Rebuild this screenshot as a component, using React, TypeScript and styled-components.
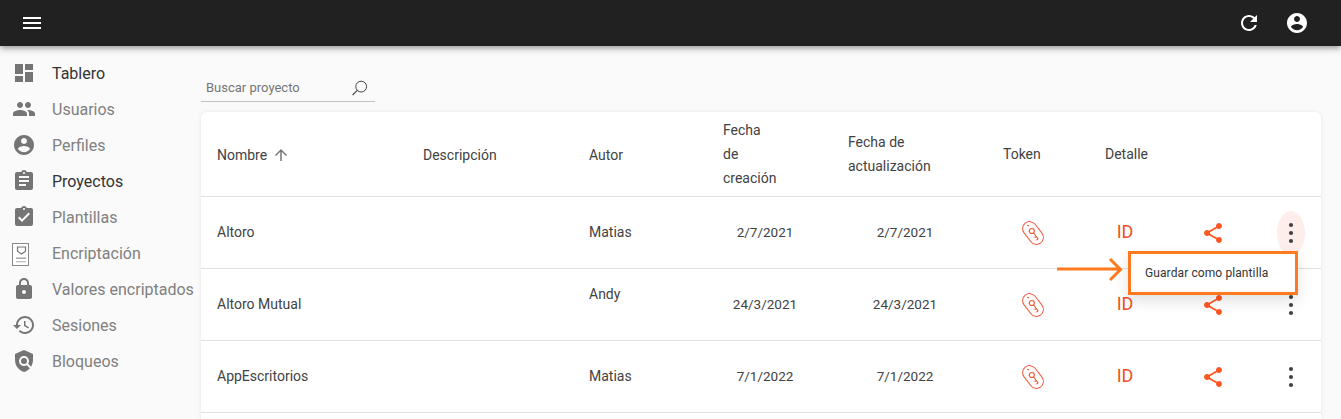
import styled, { createGlobalStyle } from "styled-components";

const GlobalStyle = createGlobalStyle`
  html, body {
    margin: 0;
    padding: 0;
    height: 419px;
    overflow: hidden;
    background: #fafafa;
    font-family: "Roboto", "Liberation Sans", sans-serif;
  }
  * {
    box-sizing: border-box;
  }
`;

const paths = {
  menu: "M3 18h18v-2H3v2zm0-5h18v-2H3v2zm0-7v2h18V6H3z",
  refresh:
    "M17.65 6.35C16.2 4.9 14.21 4 12 4c-4.42 0-7.99 3.58-7.99 8s3.57 8 7.99 8c3.73 0 6.84-2.55 7.73-6h-2.08c-.82 2.33-3.04 4-5.65 4-3.31 0-6-2.69-6-6s2.69-6 6-6c1.66 0 3.14.69 4.22 1.78L13 11h7V4l-2.35 2.35z",
  account:
    "M12 2C6.48 2 2 6.48 2 12s4.48 10 10 10 10-4.48 10-10S17.52 2 12 2zm0 3c1.66 0 3 1.34 3 3s-1.34 3-3 3-3-1.34-3-3 1.34-3 3-3zm0 14.2c-2.5 0-4.71-1.28-6-3.22.03-1.99 4-3.08 6-3.08 1.99 0 5.97 1.09 6 3.08-1.29 1.94-3.5 3.22-6 3.22z",
  dashboard: "M3 13h8V3H3v10zm0 8h8v-6H3v6zm10 0h8V11h-8v10zm0-18v6h8V3h-8z",
  people:
    "M16 11c1.66 0 2.99-1.34 2.99-3S17.66 5 16 5c-1.66 0-3 1.34-3 3s1.34 3 3 3zm-8 0c1.66 0 2.99-1.34 2.99-3S9.66 5 8 5C6.34 5 5 6.34 5 8s1.34 3 3 3zm0 2c-2.33 0-7 1.17-7 3.5V19h14v-2.5c0-2.33-4.67-3.5-7-3.5zm8 0c-.29 0-.62.02-.97.05 1.16.84 1.97 1.97 1.97 3.45V19h6v-2.5c0-2.33-4.67-3.5-7-3.5z",
  assignment:
    "M19 3h-4.18C14.4 1.84 13.3 1 12 1c-1.3 0-2.4.84-2.82 2H5c-1.1 0-2 .9-2 2v14c0 1.1.9 2 2 2h14c1.1 0 2-.9 2-2V5c0-1.1-.9-2-2-2zm-7 0c.55 0 1 .45 1 1s-.45 1-1 1-1-.45-1-1 .45-1 1-1zm2 14H7v-2h7v2zm3-4H7v-2h10v2zm0-4H7V7h10v2z",
  assignmentDone:
    "M19 3h-4.18C14.4 1.84 13.3 1 12 1c-1.3 0-2.4.84-2.82 2H5c-1.1 0-2 .9-2 2v14c0 1.1.9 2 2 2h14c1.1 0 2-.9 2-2V5c0-1.1-.9-2-2-2zm-7 0c.55 0 1 .45 1 1s-.45 1-1 1-1-.45-1-1 .45-1 1-1zm-2 14l-4-4 1.41-1.41L10 14.17l6.59-6.59L18 9l-8 8z",
  lock: "M18 8h-1V6c0-2.76-2.24-5-5-5S7 3.24 7 6v2H6c-1.1 0-2 .9-2 2v10c0 1.1.9 2 2 2h12c1.1 0 2-.9 2-2V10c0-1.1-.9-2-2-2zm-6 9c-1.1 0-2-.9-2-2s.9-2 2-2 2 .9 2 2-.9 2-2 2zm3.1-9H8.9V6c0-1.71 1.39-3.1 3.1-3.1 1.71 0 3.1 1.39 3.1 3.1v2z",
  history:
    "M13 3c-4.97 0-9 4.03-9 9H1l3.89 3.89.07.14L9 12H6c0-3.87 3.13-7 7-7s7 3.13 7 7-3.13 7-7 7c-1.93 0-3.68-.79-4.94-2.06l-1.42 1.42C8.27 19.99 10.51 21 13 21c4.97 0 9-4.03 9-9s-4.03-9-9-9zm-1 5v5l4.28 2.54.72-1.21-3.5-2.08V8H12z",
  policy:
    "M21 5l-9-4-9 4v6c0 5.55 3.84 10.74 9 12 2.3-.56 4.33-1.9 5.88-3.71l-3.12-3.12c-1.94 1.29-4.58 1.07-6.29-.64-1.95-1.95-1.95-5.12 0-7.07 1.95-1.95 5.12-1.95 7.07 0 1.71 1.71 1.92 4.35.64 6.29l2.9 2.9C20.29 15.69 21 13.38 21 11V5zM12 15a3 3 0 1 0 0-6 3 3 0 0 0 0 6z",
  share:
    "M18 16.08c-.76 0-1.44.3-1.96.77L8.91 12.7c.05-.23.09-.46.09-.7s-.04-.47-.09-.7l7.05-4.11c.54.5 1.25.81 2.04.81 1.66 0 3-1.34 3-3s-1.34-3-3-3-3 1.34-3 3c0 .24.04.47.09.7L8.04 9.81C7.5 9.31 6.79 9 6 9c-1.66 0-3 1.34-3 3s1.34 3 3 3c.79 0 1.5-.31 2.04-.81l7.12 4.16c-.05.21-.08.43-.08.65 0 1.61 1.31 2.92 2.92 2.92 1.61 0 2.92-1.31 2.92-2.92s-1.31-2.92-2.92-2.92z",
  arrowUp: "M4 12l1.41 1.41L11 7.83V20h2V7.83l5.58 5.59L20 12l-8-8-8 8z",
};

const Icon = ({ d, size = 24, color }: { d: string; size?: number; color: string }) => (
  <svg width={size} height={size} viewBox="0 0 24 24" fill={color} style={{ display: "block" }}>
    <path d={d} fillRule="evenodd" />
  </svg>
);

const CertificateIcon = () => (
  <svg width="24" height="24" viewBox="0 0 24 24" style={{ display: "block", overflow: "visible" }}>
    <rect x="0.5" y="2.5" width="16" height="22" fill="#fff" stroke="#8a8a8a" />
    <path d="M5.5 6h8v4.2L9.5 13l-4-2.8z" fill="none" stroke="#757575" strokeWidth="1.2" />
    <rect x="4" y="16.5" width="10" height="1.4" fill="#9e9e9e" />
    <rect x="4" y="20" width="10" height="1.4" fill="#c4c4c4" />
  </svg>
);

const TokenIcon = () => (
  <svg width="24" height="26" viewBox="0 0 24 26" fill="none" stroke="#f0583a" style={{ display: "block" }}>
    <rect x="5" y="0.4" width="14" height="25.2" rx="7" transform="rotate(-38 12 13)" strokeWidth="1" />
    <circle cx="7" cy="5.6" r="0.9" fill="#f0583a" stroke="none" />
    <circle cx="10.8" cy="11" r="2.5" strokeWidth="1.2" />
    <path d="M12.6 13l4.6 6M15.2 16.6l-1.6 1.2M17 19l-1.6 1.2" strokeWidth="1.2" />
  </svg>
);

const KebabIcon = () => (
  <svg width="24" height="24" viewBox="0 0 24 24" fill="#424242" style={{ display: "block", position: "relative" }}>
    <circle cx="12" cy="4" r="2.1" />
    <circle cx="12" cy="12" r="2.1" />
    <circle cx="12" cy="20" r="2.1" />
  </svg>
);

const SearchIcon = () => (
  <svg width="18" height="18" viewBox="0 0 18 18" fill="none" stroke="#424242" style={{ display: "block" }}>
    <circle cx="10.2" cy="7.6" r="5.4" strokeWidth="1" />
    <path d="M6.3 11.4L1.6 16" strokeWidth="1.1" />
  </svg>
);

const columns = "206px 166px 134px 125px 155px 102px 72px 104px 56px";

const navItems = [
  { label: "Tablero", icon: paths.dashboard, active: true },
  { label: "Usuarios", icon: paths.people },
  { label: "Perfiles", icon: paths.account },
  { label: "Proyectos", icon: paths.assignment, active: true },
  { label: "Plantillas", icon: paths.assignmentDone },
  { label: "Encriptación", custom: true },
  { label: "Valores encriptados", icon: paths.lock },
  { label: "Sesiones", icon: paths.history },
  { label: "Bloqueos", icon: paths.policy },
];

const projects = [
  { name: "Altoro", author: "Matias", created: "2/7/2021", updated: "2/7/2021", highlighted: true },
  { name: "Altoro Mutual", author: "Andy", created: "24/3/2021", updated: "24/3/2021", raised: true },
  { name: "AppEscritorios", author: "Matias", created: "7/1/2022", updated: "7/1/2022" },
];

const App = () => {
  return (
    <>
      <GlobalStyle />
      <TopBar>
        <Icon d={paths.menu} color="#fff" />
        <TopActions>
          <Icon d={paths.refresh} color="#fff" />
          <Icon d={paths.account} color="#fff" />
        </TopActions>
      </TopBar>
      <Body>
        <Sidebar>
          {navItems.map((item) => (
            <NavItem key={item.label} $active={item.active}>
              {item.custom ? <CertificateIcon /> : <Icon d={item.icon as string} color="#757575" />}
              <span>{item.label}</span>
            </NavItem>
          ))}
        </Sidebar>
        <Main>
          <SearchBox>
            <span>Buscar proyecto</span>
            <SearchIcon />
          </SearchBox>
          <Card>
            <HeadRow>
              <HeadCell $low>
                Nombre
                <Icon d={paths.arrowUp} size={18} color="#757575" />
              </HeadCell>
              <HeadCell $low>Descripción</HeadCell>
              <HeadCell $low>Autor</HeadCell>
              <HeadCell>
                Fecha
                <br />
                de
                <br />
                creación
              </HeadCell>
              <HeadCell>
                Fecha de
                <br />
                actualización
              </HeadCell>
              <HeadCell>Token</HeadCell>
              <HeadCell>Detalle</HeadCell>
              <HeadCell />
              <HeadCell />
            </HeadRow>
            {projects.map((p) => (
              <Row key={p.name}>
                <TextCell>{p.name}</TextCell>
                <TextCell />
                <TextCell $raised={p.raised}>{p.author}</TextCell>
                <DateCell>{p.created}</DateCell>
                <DateCell>{p.updated}</DateCell>
                <TokenCell>
                  <TokenIcon />
                </TokenCell>
                <DetailCell>ID</DetailCell>
                <IconCell>
                  <Icon d={paths.share} color="#ff5722" />
                </IconCell>
                <MoreCell>
                  {p.highlighted && <MoreHalo />}
                  <KebabIcon />
                </MoreCell>
              </Row>
            ))}
            <PointerArrow width="66" height="26" viewBox="0 0 66 26" fill="none" stroke="#ff7a1f" strokeWidth="3">
              <path d="M0 12h63M53 2l10.5 10.5L53 23" />
            </PointerArrow>
            <MenuFrame>
              <MenuPaper>Guardar como plantilla</MenuPaper>
            </MenuFrame>
          </Card>
        </Main>
      </Body>
    </>
  );
};

const TopBar = styled.header`
  position: relative;
  z-index: 2;
  display: flex;
  align-items: center;
  justify-content: space-between;
  height: 46px;
  padding: 0 32px 0 20px;
  background-color: #212121;
  box-shadow: 0 2px 4px -1px rgba(0, 0, 0, 0.2), 0 4px 5px rgba(0, 0, 0, 0.14), 0 1px 10px rgba(0, 0, 0, 0.12);
`;

const TopActions = styled.div`
  display: flex;
  align-items: center;
  gap: 24px;
`;

const Body = styled.div`
  display: flex;
  height: 373px;
  overflow: hidden;
`;

const Sidebar = styled.nav`
  display: flex;
  flex-direction: column;
  flex: 0 0 201px;
  padding: 9px 0 0 12px;
`;

const NavItem = styled.div<{ $active?: boolean }>`
  display: flex;
  align-items: center;
  gap: 16px;
  height: 36px;
  font-size: 16px;
  white-space: nowrap;
  color: ${(p) => (p.$active ? "#333333" : "#808080")};
`;

const Main = styled.main`
  flex: 0 0 1120px;
  padding-top: 28px;
`;

const SearchBox = styled.div`
  display: flex;
  align-items: center;
  justify-content: space-between;
  width: 174px;
  height: 28px;
  padding: 0 6px 0 5px;
  border-bottom: 1px solid #c4c4c4;
  font-size: 13px;
  color: #757575;
`;

const Card = styled.section`
  position: relative;
  height: 400px;
  margin-top: 10px;
  border-radius: 6px 6px 0 0;
  background-color: #ffffff;
  box-shadow: 0 0 4px rgba(0, 0, 0, 0.08);
`;

const HeadRow = styled.div`
  display: grid;
  grid-template-columns: ${columns};
  height: 85px;
  border-bottom: 1px solid #e0e0e0;
`;

const HeadCell = styled.div<{ $low?: boolean }>`
  display: flex;
  flex-wrap: wrap;
  align-items: center;
  align-content: center;
  column-gap: 5px;
  padding-left: 16px;
  padding-top: ${(p) => (p.$low ? "2px" : "0")};
  font-size: 14px;
  line-height: 24px;
  color: #424242;
`;

const Row = styled.div`
  display: grid;
  grid-template-columns: ${columns};
  height: 72px;
  border-bottom: 1px solid #e0e0e0;
`;

const TextCell = styled.div<{ $raised?: boolean }>`
  display: flex;
  align-items: center;
  padding-left: 16px;
  padding-bottom: ${(p) => (p.$raised ? "22px" : "2px")};
  font-size: 14px;
  color: #424242;
`;

const DateCell = styled.div`
  display: flex;
  align-items: center;
  justify-content: center;
  padding-right: 9px;
  padding-bottom: 2px;
  font-size: 13.5px;
  color: #424242;
`;

const IconCell = styled.div`
  display: flex;
  align-items: center;
  justify-content: center;
`;

const TokenCell = styled(IconCell)`
  padding-right: 10px;
`;

const DetailCell = styled(IconCell)`
  padding-bottom: 2px;
  font-size: 18px;
  color: #f4511e;
`;

const MoreCell = styled(IconCell)`
  position: relative;
  padding-right: 4px;
`;

const MoreHalo = styled.span`
  position: absolute;
  left: 12px;
  top: 14px;
  width: 28px;
  height: 44px;
  border-radius: 50%;
  background-color: #fdeeeb;
`;

const PointerArrow = styled.svg`
  position: absolute;
  left: 856px;
  top: 145px;
  display: block;
`;

const MenuFrame = styled.div`
  position: absolute;
  left: 927px;
  top: 139px;
  width: 170px;
  height: 44px;
  padding-left: 4px;
  border: 3px solid #ff7a1f;
  background-color: #ffffff;
  box-shadow: 0 6px 14px rgba(0, 0, 0, 0.12);
`;

const MenuPaper = styled.div`
  display: flex;
  align-items: center;
  height: 100%;
  padding-left: 10px;
  font-size: 12px;
  letter-spacing: 0.1px;
  color: #333333;
`;

export default App;
